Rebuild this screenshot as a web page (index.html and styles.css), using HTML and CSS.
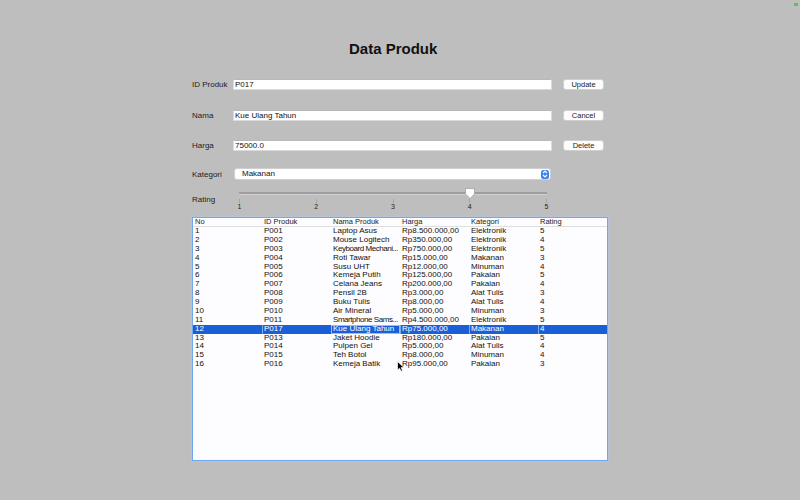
FILE: index.html
```html
<!DOCTYPE html>
<html>
<head>
<meta charset="utf-8">
<link rel="stylesheet" href="styles.css">
</head>
<body>
<div class="page">
  <h1 class="title">Data Produk</h1>
  <div class="fields">
    <div class="row">
      <div class="label">ID Produk</div>
      <div class="input">P017</div>
      <div class="btn">Update</div>
    </div>
    <div class="row">
      <div class="label">Nama</div>
      <div class="input">Kue Ulang Tahun</div>
      <div class="btn">Cancel</div>
    </div>
    <div class="row">
      <div class="label">Harga</div>
      <div class="input">75000.0</div>
      <div class="btn">Delete</div>
    </div>
  </div>
  <div class="combo-row">
    <div class="label">Kategori</div>
    <div class="combo">
      <span>Makanan</span>
      <span class="combo-arrow">
        <svg width="6" height="8" viewBox="0 0 6 8"><path d="M1 3 L3 1 L5 3 M1 5 L3 7 L5 5" fill="none" stroke="#fff" stroke-width="1.1"/></svg>
      </span>
    </div>
  </div>
  <div class="rating-row">
    <div class="label rating-label">Rating</div>
    <div class="slider">
      <div class="track"></div>
      <div class="ticks"><i></i><i></i><i></i><i></i><i></i></div>
      <div class="nums"><span>1</span><span>2</span><span>3</span><span>4</span><span>5</span></div>
      <svg class="thumb" width="10" height="11" viewBox="0 0 10 11"><path d="M0.5 0.5 H9.5 V6 L5 10.5 L0.5 6 Z" fill="#fff" stroke="#a0a0a0" stroke-width="0.8"/></svg>
    </div>
  </div>
  <div class="table">
    <div class="thead"><span>No</span><span>ID Produk</span><span>Nama Produk</span><span>Harga</span><span>Kategori</span><span>Rating</span></div>
    <div class="tr"><span>1</span><span>P001</span><span>Laptop Asus</span><span>Rp8.500.000,00</span><span>Elektronik</span><span>5</span></div>
    <div class="tr"><span>2</span><span>P002</span><span>Mouse Logitech</span><span>Rp350.000,00</span><span>Elektronik</span><span>4</span></div>
    <div class="tr"><span>3</span><span>P003</span><span class="tight">Keyboard Mechani...</span><span>Rp750.000,00</span><span>Elektronik</span><span>5</span></div>
    <div class="tr"><span>4</span><span>P004</span><span>Roti Tawar</span><span>Rp15.000,00</span><span>Makanan</span><span>3</span></div>
    <div class="tr"><span>5</span><span>P005</span><span>Susu UHT</span><span>Rp12.000,00</span><span>Minuman</span><span>4</span></div>
    <div class="tr"><span>6</span><span>P006</span><span>Kemeja Putih</span><span>Rp125.000,00</span><span>Pakaian</span><span>5</span></div>
    <div class="tr"><span>7</span><span>P007</span><span>Celana Jeans</span><span>Rp200.000,00</span><span>Pakaian</span><span>4</span></div>
    <div class="tr"><span>8</span><span>P008</span><span>Pensil 2B</span><span>Rp3.000,00</span><span>Alat Tulis</span><span>3</span></div>
    <div class="tr"><span>9</span><span>P009</span><span>Buku Tulis</span><span>Rp8.000,00</span><span>Alat Tulis</span><span>4</span></div>
    <div class="tr"><span>10</span><span>P010</span><span>Air Mineral</span><span>Rp5.000,00</span><span>Minuman</span><span>3</span></div>
    <div class="tr"><span>11</span><span>P011</span><span class="tight">Smartphone Sams...</span><span>Rp4.500.000,00</span><span>Elektronik</span><span>5</span></div>
    <div class="tr sel"><span>12</span><span>P017</span><span class="focus">Kue Ulang Tahun</span><span>Rp75.000,00</span><span>Makanan</span><span>4</span></div>
    <div class="tr"><span>13</span><span>P013</span><span>Jaket Hoodie</span><span>Rp180.000,00</span><span>Pakaian</span><span>5</span></div>
    <div class="tr"><span>14</span><span>P014</span><span>Pulpen Gel</span><span>Rp5.000,00</span><span>Alat Tulis</span><span>4</span></div>
    <div class="tr"><span>15</span><span>P015</span><span>Teh Botol</span><span>Rp8.000,00</span><span>Minuman</span><span>4</span></div>
    <div class="tr"><span>16</span><span>P016</span><span>Kemeja Batik</span><span>Rp95.000,00</span><span>Pakaian</span><span>3</span></div>
  </div>
</div>
<div class="dot"></div>
<svg class="cursor" width="8" height="11" viewBox="0 0 8 11"><path d="M0.5 0.5 L0.5 9 L2.6 7.2 L4 10.3 L5.5 9.6 L4.1 6.6 L7 6.6 Z" fill="#000" stroke="#fff" stroke-width="0.7"/></svg>
</body>
</html>
```
FILE: styles.css
```css
body {
  margin: 0;
  width: 800px;
  height: 500px;
  overflow: hidden;
  position: relative;
  background: #bfbebf;
  font-family: "Liberation Sans", Arial, sans-serif;
  color: #151515;
}

.page {
  width: 416px;
  margin: 0 auto;
  padding-top: 40px;
}

.title {
  margin: 0;
  height: 17px;
  padding-left: 157px;
  font-size: 15px;
  line-height: 17px;
  font-weight: bold;
  color: #111;
}

.fields {
  margin-top: 22px;
  display: flex;
  flex-direction: column;
  gap: 19.5px;
}

.row {
  display: grid;
  grid-template-columns: 41px 319px 52px;
  height: 11px;
  align-items: center;
}

.label {
  font-size: 8px;
  line-height: 11px;
  white-space: nowrap;
  color: #1c1c1c;
}

.input {
  height: 11px;
  box-sizing: border-box;
  background: #fff;
  border: 1px solid #dadada;
  border-top-color: #b8b8b8;
  padding: 0 1px;
  font-size: 8px;
  line-height: 9px;
  color: #111;
  white-space: nowrap;
}

.btn {
  margin-left: 11px;
  height: 11px;
  box-sizing: border-box;
  background: #fdfdfd;
  border: 1px solid #cfcfcf;
  border-radius: 3px;
  font-size: 7.5px;
  line-height: 9px;
  text-align: center;
  color: #222;
}

.combo-row {
  margin-top: 17px;
  display: grid;
  grid-template-columns: 41px 1fr;
  height: 12px;
  align-items: center;
}

.combo {
  margin-left: 1px;
  width: 317px;
  height: 12px;
  box-sizing: border-box;
  background: #fff;
  border: 1px solid #cfcfcf;
  border-radius: 3px;
  padding: 0 1px 0 7px;
  display: flex;
  align-items: center;
  justify-content: space-between;
  font-size: 8px;
  line-height: 10px;
  color: #111;
}

.combo-arrow {
  width: 8px;
  height: 9px;
  background: #3a82f1;
  border-radius: 2.5px;
  display: flex;
  align-items: center;
  justify-content: center;
}

.rating-row {
  margin-top: 8px;
  display: grid;
  grid-template-columns: 41px 1fr;
  height: 21px;
}

.rating-label {
  padding-top: 6px;
}

.slider {
  position: relative;
  margin-left: 6px;
  width: 308px;
  height: 21px;
}

.track {
  margin-top: 4px;
  height: 2px;
  background: #9e9e9e;
  border-bottom: 1px solid #d0d0d0;
}

.ticks {
  margin-top: 4px;
  height: 4px;
  display: flex;
  justify-content: space-between;
}

.ticks i {
  width: 1px;
  background: #a4a4a4;
}

.nums {
  display: flex;
  justify-content: space-between;
  font-size: 7px;
  line-height: 7px;
  color: #222;
}

.nums span {
  width: 1px;
  display: flex;
  justify-content: center;
}

.thumb {
  position: absolute;
  left: calc(75% - 5px);
  top: 0;
}

.table {
  margin-top: 8px;
  height: 244px;
  box-sizing: border-box;
  background: #fdfcfe;
  border: 1px solid #6fa7f0;
  box-shadow: 0 0 0 0.5px #a9c8f2;
  font-size: 8px;
}

.thead {
  display: grid;
  grid-template-columns: repeat(6, 69px);
  height: 8px;
  border-bottom: 1px solid #dedede;
  font-size: 7.5px;
  line-height: 8px;
  color: #222;
}

.thead span,
.tr span {
  padding-left: 2px;
  white-space: nowrap;
  overflow: hidden;
}

.tr {
  display: grid;
  grid-template-columns: repeat(6, 69px);
  height: 8.875px;
  line-height: 8.875px;
  color: #111;
}

.tr .tight {
  letter-spacing: -0.45px;
}

.tr.sel {
  background: #1b5fd8;
  color: #fff;
}

.tr.sel span + span {
  box-shadow: inset 1px 0 0 #86a8ea;
}

.tr.sel .focus {
  outline: 1px solid #9dbcf0;
  outline-offset: -1px;
}

.dot {
  position: absolute;
  left: 794px;
  top: 3px;
  width: 4px;
  height: 3px;
  background: #5ac25f;
}

.cursor {
  position: absolute;
  left: 397px;
  top: 361px;
}
```
